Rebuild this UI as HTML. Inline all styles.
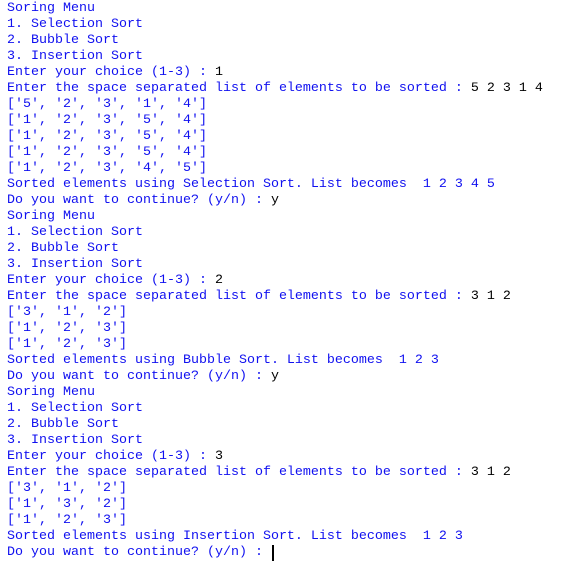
<!DOCTYPE html><html><head><style>
body{margin:0;background:#fff;width:581px;height:585px;overflow:hidden}
pre{margin:0;padding:1px 0 0 7px;font:13.33px/16px "Liberation Mono",monospace;color:#1010f0}
b{font-weight:normal;color:#000}
.c{display:inline-block;width:2px;height:16px;background:#000;vertical-align:top;margin-left:1px}
</style></head><body><pre>Soring Menu
1. Selection Sort
2. Bubble Sort
3. Insertion Sort
Enter your choice (1-3) : <b>1</b>
Enter the space separated list of elements to be sorted : <b>5 2 3 1 4</b>
['5', '2', '3', '1', '4']
['1', '2', '3', '5', '4']
['1', '2', '3', '5', '4']
['1', '2', '3', '5', '4']
['1', '2', '3', '4', '5']
Sorted elements using Selection Sort. List becomes  1 2 3 4 5
Do you want to continue? (y/n) : <b>y</b>
Soring Menu
1. Selection Sort
2. Bubble Sort
3. Insertion Sort
Enter your choice (1-3) : <b>2</b>
Enter the space separated list of elements to be sorted : <b>3 1 2</b>
['3', '1', '2']
['1', '2', '3']
['1', '2', '3']
Sorted elements using Bubble Sort. List becomes  1 2 3
Do you want to continue? (y/n) : <b>y</b>
Soring Menu
1. Selection Sort
2. Bubble Sort
3. Insertion Sort
Enter your choice (1-3) : <b>3</b>
Enter the space separated list of elements to be sorted : <b>3 1 2</b>
['3', '1', '2']
['1', '3', '2']
['1', '2', '3']
Sorted elements using Insertion Sort. List becomes  1 2 3
Do you want to continue? (y/n) : <span class="c"></span></pre></body></html>
